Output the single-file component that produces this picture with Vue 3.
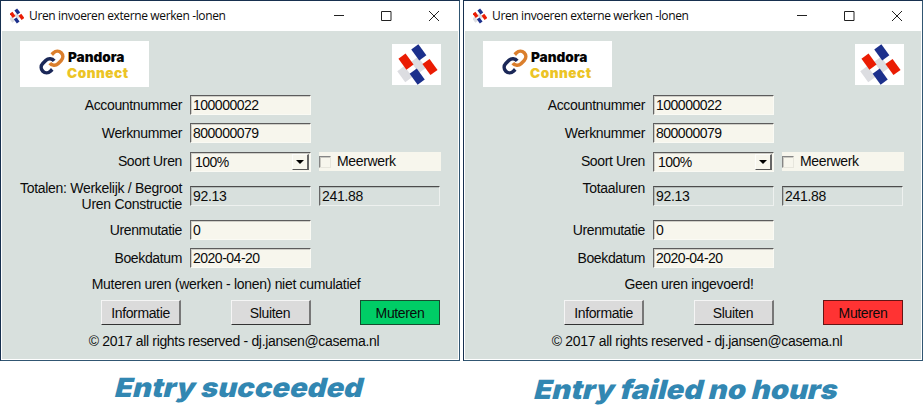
<script setup>
const tiles = [
  { x: 12.8, y: 30.2, c: '#dcdde1' },
  { x: 26.5, y: 20.8, c: '#dcdde1' },
  { x: 26.8, y: 8.3, c: '#1c308c' },
  { x: 14, y: 17.6, c: '#ea1c03' },
  { x: 38, y: 23, c: '#ea1c03' },
  { x: 25.2, y: 32.6, c: '#1c308c' },
]

const windows = [
  {
    id: 'ok',
    totals: ['Totalen: Werkelijk / Begroot', 'Uren Constructie'],
    message: 'Muteren uren (werken - lonen) niet cumulatief',
    caption: 'Entry succeeded',
  },
  {
    id: 'fail',
    totals: ['Totaaluren'],
    message: 'Geen uren ingevoerd!',
    caption: 'Entry failed no hours',
  },
]
</script>

<template>
  <main class="page">
    <section v-for="w in windows" :key="w.id" class="panel" :class="w.id">
      <div class="window">
        <header class="titlebar">
          <svg class="appicon" viewBox="7 0 38 41">
            <rect v-for="(t, i) in tiles" :key="i" x="-4.6" y="-7" width="9.2" height="14" :fill="t.c" :transform="`translate(${t.x} ${t.y}) rotate(-36)`" />
          </svg>
          <span class="title">Uren invoeren externe werken -lonen</span>
          <svg class="controls" width="106" height="12" viewBox="0 0 106 12" fill="none" stroke="#222" stroke-width="1">
            <path d="M0 5.5H10M47.5 1.5H57V10.5H47.5ZM95 1L105 11M105 1L95 11" />
          </svg>
        </header>

        <div class="body">
          <div class="logos">
            <div class="brand">
              <svg class="chain" viewBox="0 0 24 24" fill="none" stroke-width="3.3">
                <path stroke="#1b2858" d="M14 11a5 5 0 0 0-7.54-.54l-3 3a5 5 0 0 0 7.07 7.07l1.71-1.71" />
                <path stroke="#db7f2d" d="M10 13a5 5 0 0 0 7.54.54l3-3a5 5 0 0 0-7.07-7.07l-1.72 1.71" />
              </svg>
              <div class="brandtext">
                <span class="pandora">Pandora</span>
                <span class="connect">Connect</span>
              </div>
            </div>
            <svg class="mark" viewBox="0 0 49 41">
              <rect v-for="(t, i) in tiles" :key="i" x="-4.4" y="-6.8" width="8.8" height="13.6" :fill="t.c" :transform="`translate(${t.x} ${t.y}) rotate(-36)`" />
            </svg>
          </div>

          <div class="row r1"><label>Accountnummer</label><div class="field">100000022</div></div>
          <div class="row r2"><label>Werknummer</label><div class="field">800000079</div></div>
          <div class="row r3">
            <label>Soort Uren</label>
            <div class="field select">
              <span>100%</span>
              <span class="drop"><svg width="8" height="4" viewBox="0 0 8 4"><path d="M0 0H8L4 4Z" /></svg></span>
            </div>
            <div class="check"><span class="box"></span><span>Meerwerk</span></div>
          </div>
          <div class="row r4">
            <label><span v-for="line in w.totals" :key="line">{{ line }}</span></label>
            <div class="field ro">92.13</div>
            <div class="field ro">241.88</div>
          </div>
          <div class="row r5"><label>Urenmutatie</label><div class="field">0</div></div>
          <div class="row r6"><label>Boekdatum</label><div class="field">2020-04-20</div></div>

          <p class="message">{{ w.message }}</p>
          <div class="buttons">
            <button>Informatie</button>
            <button>Sluiten</button>
            <button class="mutate">Muteren</button>
          </div>
          <p class="footer">© 2017 all rights reserved - dj.jansen@casema.nl</p>
        </div>
      </div>
      <h2 class="caption">{{ w.caption }}</h2>
    </section>
  </main>
</template>

<style>
body { background: #fff; overflow: hidden; }
</style>

<style scoped>
* { box-sizing: border-box; }
.page {
  display: flex;
  gap: 3px;
  width: 924px;
  height: 415px;
  font-family: "Liberation Sans", Arial, sans-serif;
  font-size: 14px;
  letter-spacing: -0.36px;
  color: #0b0b0b;
}
.panel { width: 460px; }
.window {
  width: 460px;
  height: 361px;
  border: 1px solid #17304f;
  border-right-color: #315672;
  border-bottom-color: #315672;
  background: #fff;
  padding-right: 1px;
  padding-left: 1px;
}
.titlebar {
  height: 30px;
  display: flex;
  align-items: center;
  padding: 0 18px 0 8px;
}
.appicon { width: 14px; height: 16px; }
.title {
  font-family: "Open Sans", sans-serif;
  font-size: 12px;
  letter-spacing: -0.37px;
  margin-left: 5px;
  margin-top: -1px;
  white-space: nowrap;
}
.controls { margin-left: auto; }
.body { height: 328px; background: #d8e0dd; overflow: hidden; }
.logos {
  display: flex;
  justify-content: space-between;
  align-items: flex-start;
  height: 64px;
  padding: 10px 17px 0 18px;
}
.brand {
  width: 129px;
  height: 46px;
  background: #fff;
  display: flex;
  padding: 8px 0 0 19px;
}
.chain { width: 26px; height: 26px; }
.brandtext {
  display: flex;
  flex-direction: column;
  font-family: Inter, sans-serif;
  font-weight: 900;
  font-size: 13.6px;
  line-height: 16px;
  letter-spacing: 0;
  padding-left: 3px;
}
.pandora { color: #050505; }
.connect { color: #ecc426; margin-left: -1px; letter-spacing: 0.5px; }
.mark { width: 49px; height: 41px; background: #fff; margin-top: 3px; }
.row { display: flex; align-items: flex-start; }
.r1, .r3, .r5 { height: 28px; }
.r2 { height: 29px; }
.r4 { height: 40px; }
.r6 { height: 27px; }
label {
  width: 180px;
  margin-right: 8px;
  line-height: 20px;
  text-align: right;
  white-space: nowrap;
}
.r3 label, .check { line-height: 19px; }
.r4 label { letter-spacing: -0.29px; }
.r4 label span { display: block; line-height: 16px; }
.field {
  width: 121px;
  height: 20px;
  border: 1px solid;
  border-color: #5c5c5c #fafaf4 #fafaf4 #666;
  box-shadow: inset 1px 1px 0 rgba(0, 0, 0, 0.16);
  background: #f7f6ed;
  line-height: 18px;
  padding-left: 2px;
  letter-spacing: -0.5px;
}
.r4 .field { margin: 6px 8px 0 0; }
.ro { background: #d8e0dd; border-color: #4c4c4c #eef1ef #eef1ef #666; letter-spacing: -0.3px; }
.select { display: flex; justify-content: space-between; align-items: center; padding: 0 1px 0 4px; }
.drop {
  width: 17px;
  height: 16px;
  border: 1px solid #fdfdfa;
  border-right: 2px solid #666;
  border-bottom: 1px solid #555;
  background: #f7f6ed;
  display: flex;
  align-items: center;
  justify-content: center;
}
.check {
  width: 122px;
  height: 19px;
  margin-left: 8px;
  background: #f7f6ed;
  display: flex;
  align-items: center;
}
.box {
  width: 12px;
  height: 12px;
  border: 1px solid #858585;
  border-right-color: #e7e6dd;
  border-bottom-color: #e7e6dd;
  box-shadow: inset 1px 1px 0 rgba(0, 0, 0, 0.18);
  margin-right: 6px;
}
.message, .footer {
  margin: 0;
  text-align: center;
  line-height: 18px;
  height: 18px;
  white-space: nowrap;
}
.message { padding-right: 8px; letter-spacing: -0.31px; }
.footer { padding-left: 8px; letter-spacing: -0.33px; }
.buttons {
  display: flex;
  justify-content: space-between;
  height: 25px;
  margin: 7px 18px 7px 99px;
}
button {
  width: 80px;
  height: 25px;
  padding: 0;
  font: inherit;
  letter-spacing: -0.36px;
  color: #0b0b0b;
  background: #dbdbdb;
  border: solid;
  border-width: 1px 2px 1px 1px;
  border-color: #f5f5f5 #777 #333 #f5f5f5;
}
.mutate { border: 1px solid #174d30; background: #00cd66; }
.fail .mutate { border-color: #661414; background: #ff3333; }
.caption {
  margin: 9px 0 0 20px;
  font-family: Inter, sans-serif;
  font-weight: 900;
  font-size: 26.5px;
  letter-spacing: 0;
  line-height: 34px;
  color: #3287b2;
  text-align: center;
  white-space: nowrap;
  transform: skewX(-14deg) scaleX(1.1);
}
.fail .caption { margin: 11px 12px 0 0; }
</style>
